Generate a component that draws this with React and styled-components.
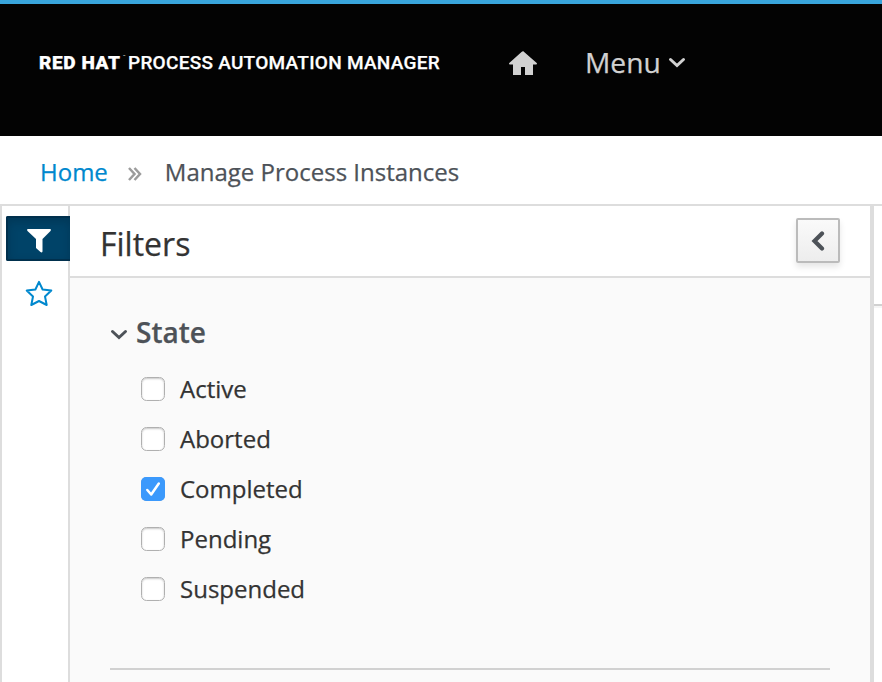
import React, { useState } from "react";
import styled, { createGlobalStyle, css } from "styled-components";

const GlobalStyle = createGlobalStyle`
  *, *::before, *::after { box-sizing: border-box; }
  html, body { margin: 0; background: #fff; overflow: hidden; }
  body {
    font-family: "Open Sans", "Noto Sans", sans-serif;
    color: #333;
    -webkit-text-stroke: 0.25px currentColor;
  }
`;

const Page = styled.div`
  display: flex;
  flex-direction: column;
  width: 882px;
  height: 682px;
  overflow: hidden;
`;

const Masthead = styled.header`
  display: flex;
  align-items: center;
  flex: 0 0 136px;
  border-top: 4px solid #39a5dc;
  background: #030303;
  padding: 0 0 15px 39px;
`;

const Brand = styled.div`
  display: flex;
  width: 470px;
  color: #fff;
  font-family: Roboto, sans-serif;
  line-height: 24px;
  white-space: nowrap;
`;

const BrandStrong = styled.span`
  width: 84px;
  font-size: 19px;
  font-weight: 900;
  letter-spacing: 0.6px;
`;

const Trademark = styled.span`
  width: 5px;
  font-size: 4px;
  line-height: 12px;
  -webkit-text-stroke: 0;
`;

const BrandName = styled.span`
  font-size: 19px;
  font-weight: 500;
  letter-spacing: 0.27px;
`;

const HomeLink = styled.a`
  display: flex;
  width: 76px;
  padding-top: 1px;
`;

const MenuButton = styled.button`
  display: flex;
  align-items: center;
  gap: 7px;
  border: 0;
  padding: 0 0 1px;
  background: none;
  color: #d1d1d1;
  font: 400 28.2px/38px "Open Sans", sans-serif;
  -webkit-text-stroke: 0.25px currentColor;
`;

const Breadcrumb = styled.nav`
  display: flex;
  align-items: center;
  flex: 0 0 70px;
  border-bottom: 2px solid #ddd;
  padding: 3px 0 0 40px;
  font-size: 24px;
  line-height: 34px;
`;

const Crumb = styled.span`
  color: ${(p) => (p.$link ? "#0088ce" : "#4d5258")};
`;

const CrumbSeparator = styled.svg`
  margin: 4px 23px 0 20px;
`;

const Workspace = styled.main`
  display: flex;
  flex: 1;
  min-height: 0;
  border-left: 2px solid #ddd;
`;

const Rail = styled.aside`
  display: flex;
  flex-direction: column;
  flex: 0 0 68px;
  border-right: 2px solid #ddd;
  padding: 10px 0 0 4px;
`;

const RailButton = styled.button`
  display: flex;
  align-items: center;
  justify-content: center;
  width: 64px;
  height: 45px;
  margin-right: -2px;
  border: 0;
  padding: 0 0 0 1px;
  background: none;
  ${(p) =>
    p.$active &&
    css`
      border: 2px solid #00304d;
      border-right: 0;
      border-radius: 2px 0 0 2px;
      background: #004368;
      box-shadow: inset 0 4px 10px rgba(0, 30, 50, 0.3);
      flex-shrink: 0;
      padding: 4px 0 0;
    `}
`;

const StarButton = styled(RailButton)`
  margin-top: 10px;
`;

const FilterPanel = styled.section`
  display: flex;
  flex-direction: column;
  flex: 0 0 804px;
  border-right: 4px solid #ddd;
  background: #fafafa;
`;

const PanelHeader = styled.div`
  display: flex;
  justify-content: space-between;
  height: 72px;
  border-bottom: 2px solid #ddd;
  padding: 12px 30px 0;
  background: #fff;
`;

const PanelTitle = styled.h1`
  margin: 3px 0 0;
  font-size: 32px;
  font-weight: 400;
  line-height: 46px;
`;

const CollapseButton = styled.button`
  display: flex;
  align-items: center;
  justify-content: center;
  width: 44px;
  height: 45px;
  border: 2px solid #bbb;
  border-radius: 2px;
  padding: 0;
  background: linear-gradient(#fafafa, #ededed);
  box-shadow: 0 4px 6px rgba(3, 3, 3, 0.1);
`;

const FilterGroup = styled.div`
  height: 392px;
  margin: 0 40px;
  border-bottom: 2px solid #d1d1d1;
  padding-top: 35px;
`;

const GroupTitle = styled.h2`
  display: flex;
  align-items: center;
  gap: 8px;
  margin: 0 0 13px;
  color: #4d5258;
  font-size: 28px;
  font-weight: 600;
  line-height: 38px;

  svg { margin-top: 3px; }
`;

const OptionRow = styled.label`
  display: flex;
  align-items: center;
  gap: 15px;
  height: 50px;
  padding-left: 31px;
  font-size: 24px;
  line-height: 34px;
`;

const CheckMark = styled.input`
  appearance: none;
  width: 24px;
  height: 24px;
  margin: 0;
  border: 1px solid #b0b0b0;
  border-radius: 5.5px;
  background: #fff;
  box-shadow: inset 0 1px 2px rgba(0, 0, 0, 0.22);
`;

const CheckHolder = styled.span`
  display: grid;
  flex: 0 0 24px;
  height: 24px;
  > * { grid-area: 1 / 1; }
`;

const Tick = styled.svg`
  border-radius: 5px;
  background: #3b99fc;
  pointer-events: none;
`;

const ContentEdge = styled.section`
  flex: 1;
  &::before {
    content: "";
    display: block;
    height: 100px;
    border-bottom: 2px solid #d1d1d1;
    box-shadow: 0 2px 0 #f5f5f5;
  }
`;

function Chevron({ width, height, points, stroke, weight }) {
  return (
    <svg width={width} height={height} viewBox={`0 0 ${width} ${height}`} fill="none">
      <polyline points={points} stroke={stroke} strokeWidth={weight} strokeLinecap="round" strokeLinejoin="miter" />
    </svg>
  );
}

const initialStates = [
  ["Active", false],
  ["Aborted", false],
  ["Completed", true],
  ["Pending", false],
  ["Suspended", false],
];

export default function App() {
  const [states, setStates] = useState(initialStates);
  const toggle = (name) =>
    setStates((all) => all.map(([n, on]) => [n, n === name ? !on : on]));

  return (
    <Page>
      <GlobalStyle />
      <Masthead>
        <Brand>
          <BrandStrong>RED HAT</BrandStrong>
          <Trademark>™</Trademark>
          <BrandName>PROCESS AUTOMATION MANAGER</BrandName>
        </Brand>
        <HomeLink aria-label="Home">
          <svg width="28" height="24" viewBox="0 0 28 24">
            <path d="M14 0 L28 12.3 Q28 14 26.5 13.5 H24 V24 H16 V16 H12 V24 H4 V13.5 H1.5 Q0 14 0 12.3 L12.5 1 Q14-.5 15.5 1Z" fill="#d1d1d1" />
          </svg>
        </HomeLink>
        <MenuButton>
          Menu
          <Chevron width={18} height={12} points="2.5,3.5 9,9.5 15.5,3.5" stroke="#d1d1d1" weight={3} />
        </MenuButton>
      </Masthead>
      <Breadcrumb>
        <Crumb $link>Home</Crumb>
        <CrumbSeparator width="14" height="14" viewBox="0 0 14 14" fill="none">
          <path d="M1 1 6.5 7 1 13M6.5 1 12 7 6.5 13" stroke="#9c9c9c" strokeWidth="2.5" />
        </CrumbSeparator>
        <Crumb>Manage Process Instances</Crumb>
      </Breadcrumb>
      <Workspace>
        <Rail>
          <RailButton $active aria-label="Filters">
            <svg width="24" height="24" viewBox="0 0 24 24">
              <path d="M.5 0H23.5Q24.2.8 23.5 2L15.5 10V22.5Q15 24 13.5 23L9 19V10L.5 2Q-.2.8.5 0Z" fill="#fff" />
            </svg>
          </RailButton>
          <StarButton aria-label="Saved filters">
            <svg width="28" height="27" viewBox="0 0 28 27">
              <path d="M14 1.8 17.6 9.5 26.3 10.6 20 16.5 21.7 25 14 21 6.3 25 8 16.5 1.7 10.6 10.4 9.5Z" fill="none" stroke="#0088ce" strokeWidth="2" strokeLinejoin="round" />
            </svg>
          </StarButton>
        </Rail>
        <FilterPanel>
          <PanelHeader>
            <PanelTitle>Filters</PanelTitle>
            <CollapseButton aria-label="Collapse filters">
              <Chevron width={14} height={20} points="11,2.5 3.5,10 11,17.5" stroke="#4d5258" weight={4.2} />
            </CollapseButton>
          </PanelHeader>
          <FilterGroup>
            <GroupTitle>
              <Chevron width={18} height={12} points="2.5,3.5 9,9.5 15.5,3.5" stroke="#4d5258" weight={3} />
              State
            </GroupTitle>
            {states.map(([name, on]) => (
              <OptionRow key={name}>
                <CheckHolder>
                  <CheckMark type="checkbox" checked={on} onChange={() => toggle(name)} />
                  {on && (
                    <Tick width="24" height="24" viewBox="0 0 24 24" fill="none">
                      <path d="M6.3 13 10.2 17.5 17.8 6.5" stroke="#fff" strokeWidth="2.5" strokeLinecap="round" strokeLinejoin="round" />
                    </Tick>
                  )}
                </CheckHolder>
                {name}
              </OptionRow>
            ))}
          </FilterGroup>
        </FilterPanel>
        <ContentEdge />
      </Workspace>
    </Page>
  );
}
